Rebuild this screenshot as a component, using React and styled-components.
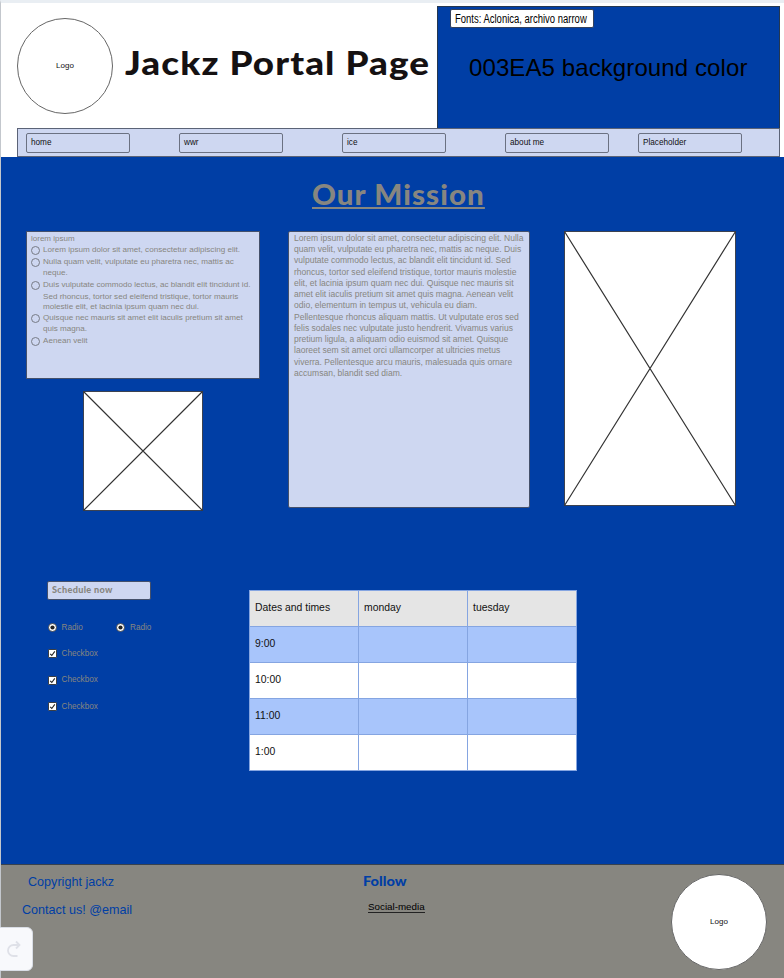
import React from "react";
import styled, { createGlobalStyle } from "styled-components";

const BLUE = "#003ea5";
const PALE = "#ced7f1";
const GREY = "#878680";

const Global = createGlobalStyle`
  * { box-sizing: border-box; }
  body { margin: 0; font-family: "Liberation Sans", Arial, sans-serif; color: #111; overflow: hidden; }
`;

const Page = styled.div`
  width: 784px;
  height: 978px;
  display: flex;
  flex-direction: column;
  border-top: 3px solid #e9eef3;
  border-left: 1px solid #c3c7cd;
  background: #fff;
`;

const Label = styled.span`
  display: block;
  white-space: nowrap;
  font-size: ${(p) => p.$size}px;
  line-height: ${(p) => p.$lh || p.$size * 1.2}px;
  letter-spacing: ${(p) => p.$ls || 0}px;
  color: ${(p) => p.$color || "#111"};
`;

const Display = styled(Label)`
  width: max-content;
  font-family: Lato, "Open Sans", sans-serif;
  font-weight: 900;
  transform: scaleX(${(p) => p.$stretch || 1});
  transform-origin: left;
`;

const Header = styled.header`
  height: 125px;
  display: flex;
`;

const Brand = styled.div`
  width: 436px;
  flex: none;
  display: flex;
  padding: 15px 0 0 16px;
`;

const Logo = styled.div`
  width: 96px;
  height: 96px;
  flex: none;
  border: 1px solid #666;
  border-radius: 50%;
  background: #fff;
  display: flex;
  align-items: center;
  justify-content: center;
`;

const BrandTitle = styled.h1`
  margin: 22px 0 0 12px;
  font-weight: inherit;
`;

const ColorPanel = styled.div`
  width: 343px;
  margin-top: 3px;
  background: ${BLUE};
  border: 1px solid #24374f;
  border-bottom: 0;
  padding: 2px 0 0 12px;
`;

const FontTag = styled.div`
  width: 144px;
  height: 19px;
  border: 1px solid #33415c;
  border-radius: 2px;
  background: #fff;
  padding: 1px 0 0 4px;
`;

const Narrow = styled(Label)`
  width: max-content;
  transform: scaleX(0.79);
  transform-origin: left;
`;

const ColorName = styled.div`
  padding: 26px 0 0 19px;
`;

const Nav = styled.nav`
  width: 763px;
  height: 29px;
  margin-left: 16px;
  background: ${PALE};
  border: 1px solid #5b6377;
  display: grid;
  grid-template-columns: 153px 163px 163px 133px 105px;
  padding: 4px 0 0 8px;
`;

const NavButton = styled.a`
  width: 104px;
  height: 20px;
  border: 1px solid #6b7182;
  border-radius: 2px;
  display: flex;
  align-items: center;
  padding-left: 4px;
`;

const Main = styled.main`
  height: 707px;
  background: ${BLUE};
`;

const Heading = styled.h2`
  margin: 0;
  height: 74px;
  padding: 19px 0 0 311px;
  font-weight: inherit;
`;

const Underlined = styled(Display)`
  text-decoration: underline;
  text-decoration-thickness: 2px;
  text-underline-offset: 2px;
  text-decoration-skip-ink: none;
`;

const Columns = styled.div`
  display: grid;
  grid-template-columns: 262px 276px 172px;
  height: 350px;
  padding-left: 25px;
`;

const Card = styled.div`
  width: ${(p) => p.$w}px;
  height: ${(p) => p.$h}px;
  background: ${PALE};
  border: 1px solid #44506b;
  border-radius: ${(p) => p.$r || 0}px;
  padding: ${(p) => p.$pad};
`;

const Item = styled.div`
  display: flex;
  gap: 3px;
`;

const Ring = styled.i`
  width: 9px;
  height: 9px;
  margin-top: 2px;
  flex: none;
  border: 1px solid #777b86;
  border-radius: 50%;
`;

const ImageSvg = styled.svg`
  display: block;
  margin: ${(p) => p.$m || 0};
`;

const Lower = styled.div`
  display: flex;
  padding-left: 46px;
`;

const Form = styled.div`
  width: 202px;
`;

const OptionList = styled.div`
  margin: 22.500px 0 0 0.5px;
`;

const Options = styled.div`
  display: flex;
  height: 26.4px;
`;

const Option = styled.label`
  display: flex;
  align-items: center;
  width: 68.5px;
  gap: 5px;
  height: 10px;
`;

const Table = styled.div`
  width: 328px;
  height: 181px;
  margin-top: 9px;
  display: grid;
  grid-template-columns: 109px 109px 109px;
  grid-template-rows: 36px 36px 36px 36px 36px;
  border: solid #85a5e1;
  border-width: 1px 0 0 1px;
`;

const Cell = styled.div`
  background: ${(p) => p.$bg};
  border: solid #85a5e1;
  border-width: 0 1px 1px 0;
  display: flex;
  align-items: center;
  padding-left: 5px;
`;

const Footer = styled.footer`
  flex: 1;
  background: ${GREY};
  border-top: 1px solid #38424e;
  display: grid;
  grid-template-columns: 362px 308px 96px;
`;

const Contact = styled.div`
  display: flex;
  flex-direction: column;
  gap: 12px;
  padding: 9px 0 0 21px;
`;

const Copyright = styled.div`
  padding-left: 6px;
`;

const Follow = styled.div`
  padding-top: 8px;
`;

const Social = styled.a`
  display: block;
  width: max-content;
  margin: 12px 0 0 5px;
  border-bottom: 1px solid #222;
`;

const FooterLogo = styled.div`
  padding-top: 9px;
`;

const RedoButton = styled.button`
  position: absolute;
  left: -8px;
  top: 927px;
  width: 41px;
  height: 44px;
  border: 1px solid #d9dde5;
  border-radius: 6px;
  background: #f8f9fc;
  padding: 0 0 0 12px;
  display: flex;
  align-items: center;
`;

function CrossedImage({ w, h, m }) {
  return (
    <ImageSvg width={w} height={h} viewBox={`0 0 ${w} ${h}`} $m={m}>
      <rect x=".5" y=".5" width={w - 1} height={h - 1} fill="#fff" stroke="#3c4250" />
      <path d={`M.5 .5L${w - 0.5} ${h - 0.5}M${w - 0.5} .5L.5 ${h - 0.5}`} stroke="#333" strokeWidth="1.2" />
    </ImageSvg>
  );
}

const RadioIcon = () => (
  <svg width="9" height="9" viewBox="0 0 9 9">
    <circle cx="4.5" cy="4.5" r="4" fill="#fff" stroke="#333" strokeWidth=".8" />
    <circle cx="4.5" cy="4.5" r="2.1" fill="#222" />
  </svg>
);

const CheckIcon = () => (
  <svg width="9" height="9" viewBox="0 0 9 9">
    <rect x=".5" y=".5" width="8" height="8" rx=".6" fill="#fff" stroke="#333" strokeWidth=".9" />
    <path d="M2.2 4.8L3.8 6.5L6.8 2.4" fill="none" stroke="#222" strokeWidth="1.1" />
  </svg>
);

const nav = ["home", "wwr", "ice", "about me", "Placeholder"];

const bullets = [
  [["Lorem ipsum dolor sit amet, consectetur adipiscing elit.", 11.6]],
  [["Nulla quam velit, vulputate eu pharetra nec, mattis ac", 11.8], ["neque.", 11.6]],
  [
    ["Duis vulputate commodo lectus, ac blandit elit tincidunt id.", 11.6],
    ["Sed rhoncus, tortor sed eleifend tristique, tortor mauris", 11.4],
    ["molestie elit, et lacinia ipsum quam nec dui.", 9.9],
  ],
  [["Quisque nec mauris sit amet elit iaculis pretium sit amet", 11.6], ["quis magna.", 11.6]],
  [["Aenean velit", 11]],
];

const paragraph = [
  "Lorem ipsum dolor sit amet, consectetur adipiscing elit. Nulla",
  "quam velit, vulputate eu pharetra nec, mattis ac neque. Duis",
  "vulputate commodo lectus, ac blandit elit tincidunt id. Sed",
  "rhoncus, tortor sed eleifend tristique, tortor mauris molestie",
  "elit, et lacinia ipsum quam nec dui. Quisque nec mauris sit",
  "amet elit iaculis pretium sit amet quis magna. Aenean velit",
  "odio, elementum in tempus ut, vehicula eu diam.",
  "Pellentesque rhoncus aliquam mattis. Ut vulputate eros sed",
  "felis sodales nec vulputate justo hendrerit. Vivamus varius",
  "pretium ligula, a aliquam odio euismod sit amet. Quisque",
  "laoreet sem sit amet orci ullamcorper at ultricies metus",
  "viverra. Pellentesque arcu mauris, malesuada quis ornare",
  "accumsan, blandit sed diam.",
];

const rows = [
  ["#e5e5e5", "Dates and times", "monday", "tuesday"],
  ["#a8c5fb", "9:00", "", ""],
  ["#fff", "10:00", "", ""],
  ["#a8c5fb", "11:00", "", ""],
  ["#fff", "1:00", "", ""],
];

export default function App() {
  return (
    <>
      <Global />
      <Page>
        <Header>
          <Brand>
            <Logo><Label $size={8} $ls={0.05}>Logo</Label></Logo>
            <BrandTitle><Display $size={33} $lh={44} $ls={1} $stretch={1.115} $color="#151112">Jackz Portal Page</Display></BrandTitle>
          </Brand>
          <ColorPanel>
            <FontTag><Narrow $size={12} $lh={17} $color="#000">Fonts: Aclonica, archivo narrow</Narrow></FontTag>
            <ColorName><Label $size={24} $lh={28} $ls={0.1} $color="#000">003EA5 background color</Label></ColorName>
          </ColorPanel>
        </Header>
        <Nav>
          {nav.map((n) => (
            <NavButton key={n}><Label $size={8.2}>{n}</Label></NavButton>
          ))}
        </Nav>
        <Main>
          <Heading><Underlined $size={28} $lh={36} $ls={1} $stretch={1.055} $color={GREY}>Our Mission</Underlined></Heading>
          <Columns>
            <div>
              <Card $w={234} $h={148} $pad="1px 0 0 4px">
                <Label $size={8} $lh={11} $color={GREY}>lorem ipsum</Label>
                {bullets.map((lines) => (
                  <Item key={lines[0][0]}>
                    <Ring />
                    <div>
                      {lines.map(([text, lh]) => (
                        <Label key={text} $size={8.1} $lh={lh} $color={GREY}>{text}</Label>
                      ))}
                    </div>
                  </Item>
                ))}
              </Card>
              <CrossedImage w={120} h={120} m="12px 0 0 57px" />
            </div>
            <Card $w={242} $h={277} $r={2} $pad="1px 0 0 5px">
              {paragraph.map((line) => (
                <Label key={line} $size={8.54} $lh={11.23} $color={GREY}>{line}</Label>
              ))}
            </Card>
            <CrossedImage w={172} h={275} />
          </Columns>
          <Lower>
            <Form>
              <Card $w={104} $h={19} $r={2} $pad="2px 0 0 4px">
                <Display $size={8.5} $lh={12} $ls={0.3} $stretch={1.07} $color={GREY}>Schedule now</Display>
              </Card>
              <OptionList>
                <Options>
                  <Option><RadioIcon /><Label $size={8.2} $color={GREY}>Radio</Label></Option>
                  <Option><RadioIcon /><Label $size={8.2} $color={GREY}>Radio</Label></Option>
                </Options>
                {[1, 2, 3].map((n) => (
                  <Options key={n}>
                    <Option><CheckIcon /><Label $size={8.2} $color={GREY}>Checkbox</Label></Option>
                  </Options>
                ))}
              </OptionList>
            </Form>
            <Table>
              {rows.map(([bg, ...cells]) =>
                cells.map((c, i) => (
                  <Cell key={bg + c + i} $bg={bg}><Label $size={10.4}>{c}</Label></Cell>
                ))
              )}
            </Table>
          </Lower>
        </Main>
        <Footer>
          <Contact>
            <Copyright><Label $size={12.6} $lh={16} $color={BLUE}>Copyright jackz</Label></Copyright>
            <Label $size={12.6} $lh={16} $color={BLUE}>Contact us! @email</Label>
          </Contact>
          <Follow>
            <Display $size={13} $lh={16} $stretch={1.12} $color={BLUE}>Follow</Display>
            <Social><Label $size={9.8} $lh={11} $color="#000">Social-media</Label></Social>
          </Follow>
          <FooterLogo><Logo><Label $size={8} $ls={0.05}>Logo</Label></Logo></FooterLogo>
        </Footer>
      </Page>
      <RedoButton aria-label="Redo">
        <svg width="18" height="20" viewBox="0 0 18 20" fill="none" stroke="#dfe1e8" strokeWidth="1.8">
          <path d="M12.500 17H8.500A5.500 5.500 0 0 1 8.500 6H14M11 2.500L14.500 6L11 9.500" />
        </svg>
      </RedoButton>
    </>
  );
}
